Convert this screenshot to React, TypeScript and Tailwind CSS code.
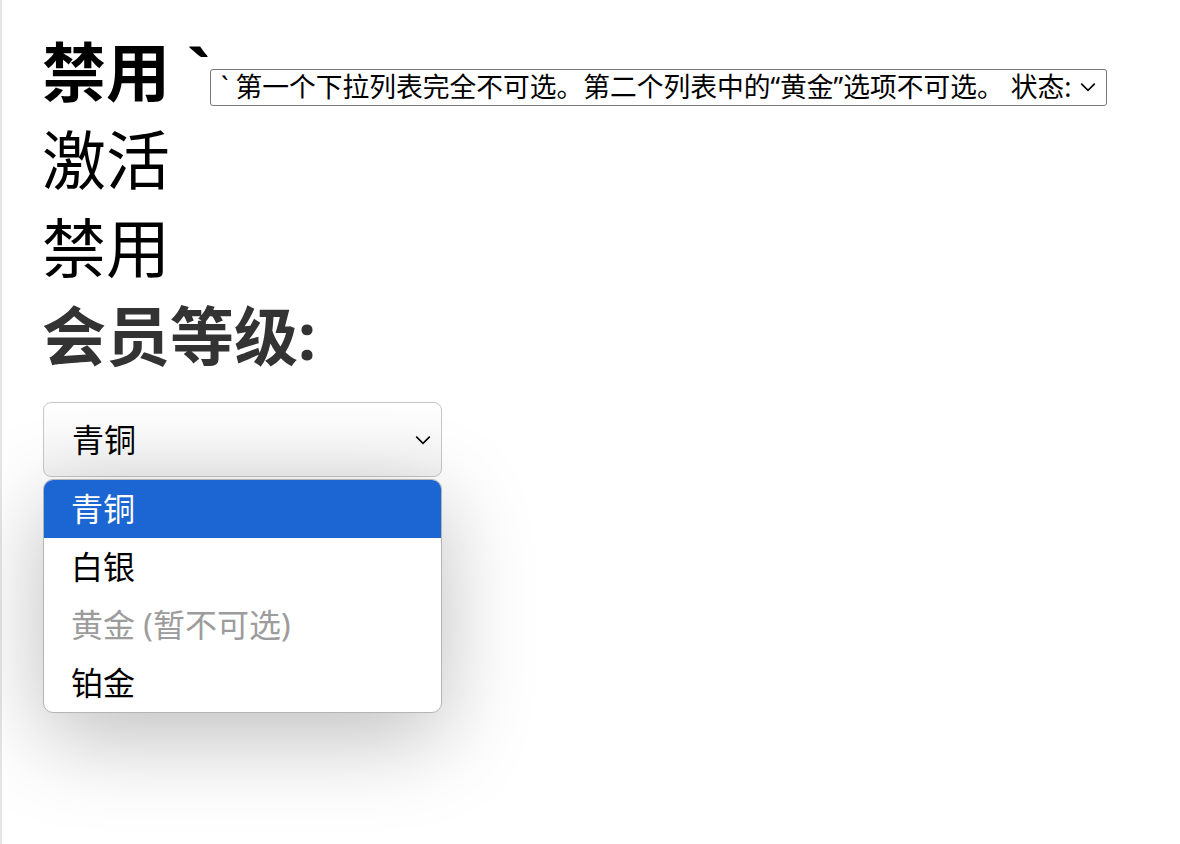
import React from "react";

const font = { fontFamily: '"Noto Sans", "Noto Sans CJK SC", sans-serif' };

const Chevron = ({ className }: { className?: string }) => (
  <svg viewBox="0 0 16 16" className={className} fill="none" stroke="currentColor" strokeWidth={1.4}>
    <polyline points="2,5 8,11 14,5" />
  </svg>
);

const levels = [
  { label: "青铜", active: true },
  { label: "白银" },
  { label: "黄金 (暂不可选)", disabled: true },
  { label: "铂金" },
];

export default function App() {
  return (
    <div
      className="min-h-screen bg-white border-l-2 border-[#e6e6e6] pl-[40px] pt-[28px] text-black"
      style={font}
    >
      <div className="text-[64px] leading-[88px]">
        <span className="font-bold">禁用 `</span>
        <span className="inline-flex items-center h-[37px] align-[-1px] rounded-[3px] border border-[#767676] pl-[10px] pr-[9px] text-[26.75px] leading-none">
          ` 第一个下拉列表完全不可选。第二个列表中的“黄金”选项不可选。 状态:
          <Chevron className="w-[18px] h-[18px] ml-[8px]" />
        </span>
      </div>
      <div className="text-[64px] leading-[88px]">激活</div>
      <div className="text-[64px] leading-[88px]">禁用</div>
      <div className="text-[64px] leading-[88px] font-bold text-[#333]">会员等级:</div>

      <div className="mt-[22px] ml-[1px] w-[399px]">
        <div className="h-[75px] flex items-center justify-between rounded-[8px] border-[1.5px] border-[#c6c6c6] bg-gradient-to-b from-white to-[#f3f3f3] pl-[28px] pr-[9px] text-[32px]">
          <span>青铜</span>
          <Chevron className="w-[18px] h-[18px]" />
        </div>
        <div className="mt-[2px] rounded-[10px] border-[1.5px] border-[#b4b4b4] bg-white overflow-hidden shadow-[0_24px_90px_rgba(0,0,0,0.26)]">
          {levels.map((l) => (
            <div
              key={l.label}
              className={`h-[58px] flex items-center pl-[27px] text-[32px] ${
                l.active ? "bg-[#1b66d2] text-white" : l.disabled ? "text-[#9c9c9c]" : "text-black"
              }`}
            >
              {l.label}
            </div>
          ))}
        </div>
      </div>
    </div>
  );
}
